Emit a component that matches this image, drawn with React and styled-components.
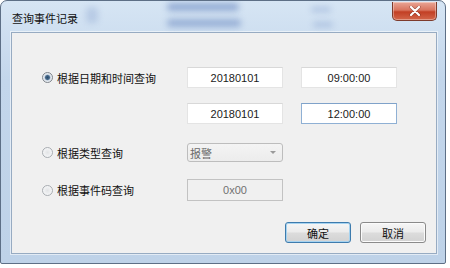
import React from "react";
import styled, { createGlobalStyle } from "styled-components";

const GlobalStyle = createGlobalStyle`
  html, body {
    margin: 0;
    padding: 0;
    background: #ffffff;
  }
  body {
    font-family: "Noto Sans CJK SC", "Liberation Sans", sans-serif;
  }
`;

const cjk = `"Noto Sans CJK SC", "Liberation Sans", sans-serif`;
const latin = `"Liberation Sans", "Noto Sans CJK SC", sans-serif`;

const Window = styled.div`
  position: relative;
  width: 446px;
  height: 264px;
  box-sizing: border-box;
  display: flex;
  flex-direction: column;
  border: 1px solid #5d6f86;
  border-radius: 7px 7px 2px 2px;
  background: linear-gradient(180deg, #d6e5f4 0%, #c3d6eb 30%, #bed2e8 100%);
  overflow: hidden;
`;

const TitleBar = styled.div`
  position: relative;
  height: 31px;
  flex: none;
  display: flex;
  justify-content: space-between;
  align-items: flex-start;
  padding: 0 8px 0 11px;
  overflow: hidden;
`;

const Smudge = styled.span`
  position: absolute;
  border-radius: 4px;
  background: #6a88c0;
  filter: blur(3px);
  opacity: ${(p) => p.$o};
`;

const Title = styled.span`
  position: relative;
  margin-top: 10px;
  font-family: ${cjk};
  font-size: 11px;
  line-height: 14px;
  color: #111;
`;

const CloseButton = styled.div`
  position: relative;
  width: 45px;
  height: 19px;
  margin-top: 1px;
  box-sizing: border-box;
  border: 1px solid #7d3b2c;
  border-top: none;
  border-radius: 0 0 5px 5px;
  background: linear-gradient(180deg, #e9a696 0%, #d9745e 45%, #c23f24 55%, #d3664a 100%);
  display: flex;
  align-items: center;
  justify-content: center;
  box-shadow: inset 0 0 0 1px rgba(255, 255, 255, 0.35);
`;

const Client = styled.div`
  flex: 1;
  margin: 0 8px 9px 10px;
  box-sizing: border-box;
  border: 1px solid #97abc2;
  box-shadow: 0 0 0 1px rgba(255, 255, 255, 0.55);
  background: #f0f0f0;
  display: flex;
  flex-direction: column;
  padding: 0 10px 0 30px;
`;

const Row = styled.div`
  display: grid;
  grid-template-columns: 127px 96px 96px;
  column-gap: 18px;
  align-items: center;
  height: ${(p) => p.$h}px;
  margin-top: ${(p) => p.$top}px;
`;

const Option = styled.label`
  display: flex;
  align-items: center;
  gap: 4px;
  font-family: ${cjk};
  font-size: 11px;
  color: #111;
  white-space: nowrap;
`;

const Radio = styled.span`
  width: 11px;
  height: 11px;
  box-sizing: border-box;
  border-radius: 50%;
  border: 1px solid ${(p) => (p.$checked ? "#7f858c" : "#a9adb2")};
  background: ${(p) =>
    p.$checked
      ? "radial-gradient(circle, #2c4a68 0, #46698c 2px, #d8e0e9 3.2px, #f4f6f8 5px)"
      : "radial-gradient(circle, #e2e4e6 0, #f6f7f8 5px)"};
  flex: none;
`;

const TextBox = styled.input`
  width: 96px;
  height: 100%;
  box-sizing: border-box;
  margin: 0;
  padding: 0;
  border: 1px solid ${(p) => (p.$focused ? "#8fb0d4" : "#e4e4e4")};
  border-top-color: ${(p) => (p.$focused ? "#7fa2c9" : "#d8d8d8")};
  background: #ffffff;
  font-family: ${latin};
  font-size: 11px;
  color: #1b1b1b;
  text-align: center;
  outline: none;
`;

const DisabledBox = styled(TextBox)`
  border: 1px solid #c2c2c2;
  background: #f0f0f0;
  color: #707070;
`;

const Combo = styled.div`
  width: 96px;
  height: 100%;
  box-sizing: border-box;
  border: 1px solid #bdbdbd;
  border-radius: 3px;
  background: linear-gradient(180deg, #f4f4f4 0%, #ececec 100%);
  display: flex;
  align-items: center;
  justify-content: space-between;
  padding: 0 6px 0 2px;
  font-family: ${cjk};
  font-size: 11px;
  color: #6a6a6a;
`;

const Arrow = styled.span`
  width: 0;
  height: 0;
  border-left: 3px solid transparent;
  border-right: 3px solid transparent;
  border-top: 3px solid #9a9a9a;
`;

const ButtonRow = styled.div`
  display: flex;
  justify-content: flex-end;
  gap: 9px;
  margin-top: 21px;
`;

const Button = styled.button`
  width: 66px;
  height: 21px;
  box-sizing: border-box;
  padding: 0;
  border: 1px solid ${(p) => (p.$default ? "#3d7bad" : "#8a8a8a")};
  border-radius: 3px;
  background: linear-gradient(180deg, #f6f6f6 0%, #ebebeb 48%, #dcdcdc 52%, #d2d2d2 100%);
  box-shadow: inset 0 0 0 1px ${(p) => (p.$default ? "#a6d3f0" : "#fbfbfb")};
  font-family: ${cjk};
  font-size: 11px;
  color: #111;
`;

const App = () => (
  <>
    <GlobalStyle />
    <Window>
      <TitleBar>
        <Smudge $o={0.6} style={{ left: 166, top: 2, width: 72, height: 8 }} />
        <Smudge $o={0.55} style={{ left: 166, top: 18, width: 74, height: 8 }} />
        <Smudge $o={0.35} style={{ left: 310, top: 6, width: 20, height: 5 }} />
        <Smudge $o={0.35} style={{ left: 312, top: 21, width: 20, height: 5 }} />
        <Smudge $o={0.25} style={{ left: 85, top: 6, width: 12, height: 16 }} />
        <Title>查询事件记录</Title>
        <CloseButton>
          <svg width="12" height="10" viewBox="0 0 12 10">
            <path
              d="M2 1 L10 9 M10 1 L2 9"
              stroke="#5a1f14"
              strokeWidth="3.4"
              strokeLinecap="round"
              opacity="0.45"
            />
            <path
              d="M2 1 L10 9 M10 1 L2 9"
              stroke="#ffffff"
              strokeWidth="2.2"
              strokeLinecap="round"
            />
          </svg>
        </CloseButton>
      </TitleBar>
      <Client>
        <Row $h={21} $top={34}>
          <Option>
            <Radio $checked />
            根据日期和时间查询
          </Option>
          <TextBox readOnly defaultValue="20180101" />
          <TextBox readOnly defaultValue="09:00:00" />
        </Row>
        <Row $h={21} $top={15}>
          <span />
          <TextBox readOnly defaultValue="20180101" />
          <TextBox readOnly $focused defaultValue="12:00:00" />
        </Row>
        <Row $h={19} $top={19}>
          <Option>
            <Radio />
            根据类型查询
          </Option>
          <Combo>
            报警
            <Arrow />
          </Combo>
        </Row>
        <Row $h={22} $top={17}>
          <Option>
            <Radio />
            根据事件码查询
          </Option>
          <DisabledBox readOnly disabled defaultValue="0x00" />
        </Row>
        <ButtonRow>
          <Button $default>确定</Button>
          <Button>取消</Button>
        </ButtonRow>
      </Client>
    </Window>
  </>
);

export default App;
